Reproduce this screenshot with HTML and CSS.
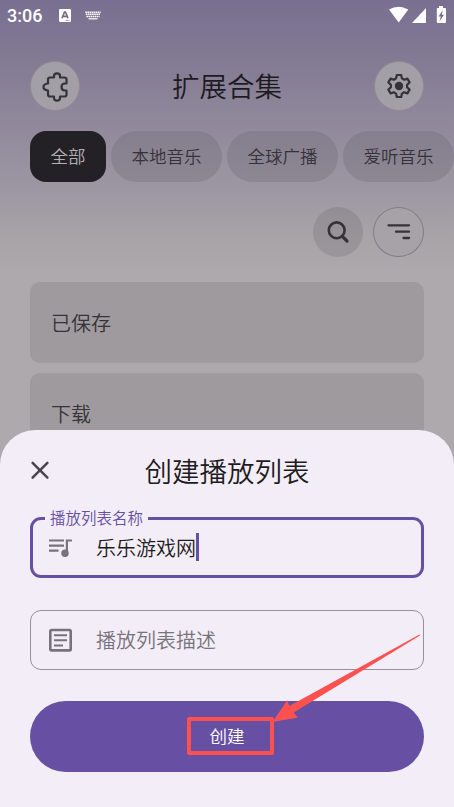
FILE: index.html
```html
<!DOCTYPE html>
<html lang="zh-CN">
<head>
<meta charset="utf-8">
<title>创建播放列表</title>
<link rel="stylesheet" href="styles.css">
</head>
<body>
<div class="phone">
  <div class="status">
    <span class="time">3:06</span>
    <svg class="ime" width="12" height="13" viewBox="0 0 12 13"><rect width="12" height="13" rx="1.2" fill="#fff"/><path d="M3 9.2 5.500 3h1L9 9.200M4 7.300h4" fill="none" stroke="#756c8b" stroke-width="1.700"/><path d="M6.500 11.500h4" stroke="#aaa4b6" stroke-width="1"/></svg>
    <svg class="keyboard" width="16" height="9" viewBox="0 0 16 9"><path d="M.3 1.200h15.400M.8 3.300h14.400M1.400 5.400h13.200" stroke="#fff" stroke-width="1.500" stroke-dasharray="1.600 .5"/><path d="M3.500 7.800h9" stroke="#fff" stroke-width="1.200"/></svg>
    <svg class="signals" width="60" height="18" viewBox="0 0 60 18" fill="#fff"><path d="M1 3.600Q10.500-2.200 20.300 3.600L10.700 16.400ZM24 17 38 2V17Z"/><path d="M48.800 2h2.200V0h4v2h2q1 0 1 1v13q0 1-1 1h-7.200q-1 0-1-1V3q0-1 1-1Z"/><path d="m54.500 4.500-4 6h2.300l-1.300 5 4.500-6.700h-2.300l1-4.300Z" fill="#756c8b"/></svg>
  </div>
  <header class="header">
    <div class="round">
      <svg class="puzzle" width="30" height="32" viewBox="0 0 30 32" fill="none" stroke="#35323a" stroke-width="2.200" stroke-linejoin="round"><path d="M7 9.500q0-2 2-2h4V6q0-2.600 3-2.600T19 6v1.500h4.500q2 0 2 2v4H24q-3.500 0-3.500 3.500t3.500 3.500h1.500v4q0 2-2 2H19V28q0 2.600-3 2.600T13 28v-1.500H9q-2 0-2-2v-4q-4.500-.5-4.500-3.500T7 13.500Z"/></svg>
    </div>
    <h1 class="title">扩展合集</h1>
    <div class="round">
      <svg width="26" height="26" viewBox="0 0 26 26" fill="none" stroke="#35323a" stroke-width="2.200" stroke-linejoin="round"><path d="M10.800 2h4.400l.7 3.400 2.300 1.300 3.200-1.100 2.200 3.800-2.500 2.300v2.600l2.500 2.300-2.200 3.800-3.200-1.100-2.300 1.300-.7 3.400h-4.400l-.7-3.400-2.300-1.300-3.200 1.100-2.200-3.800 2.500-2.300v-2.600L2.400 9.400l2.200-3.800 3.200 1.100 2.300-1.300Z"/><circle cx="13" cy="13" r="4.200" fill="#35323a" stroke="none"/></svg>
    </div>
  </header>
  <nav class="chips">
    <span class="chip chip-active">全部</span><span class="chip">本地音乐</span><span class="chip">全球广播</span><span class="chip">爱听音乐</span>
  </nav>
  <div class="tools">
    <div class="tool tool-search"><svg width="24" height="24" viewBox="0 0 24 24" fill="none" stroke="#35323a" stroke-width="2.600" stroke-linecap="round"><circle cx="10.700" cy="10.300" r="7.900"/><path d="m16.300 16.300 4.700 4.700" stroke-width="3.200"/></svg></div>
    <div class="tool tool-sort"><svg width="24" height="18" viewBox="0 0 24 18" stroke="#35323a" stroke-width="2.300" stroke-linecap="round"><path d="M1.500 2.300h20.500M9 8.700h13M16.500 15h5.500"/></svg></div>
  </div>
  <main class="cards">
    <div class="card">已保存</div>
    <div class="card">下载</div>
  </main>
  <section class="sheet">
    <div class="sheet-head">
      <svg class="close" width="20" height="20" viewBox="0 0 20 20" stroke="#49454f" stroke-width="2.500" stroke-linecap="round"><path d="m2.600 1.800 14.800 14.800m0-14.800L2.600 16.600"/></svg>
      <h2 class="sheet-title">创建播放列表</h2>
    </div>
    <div class="field field-focused">
      <span class="label">播放列表名称</span>
      <svg class="field-icon" width="26" height="20" viewBox="0 0 26 20" fill="none" stroke="#77737b" stroke-width="2.200"><path d="M1 3.500h15M1 8.700h15M1 13.700h9.500"/><path d="M18.900 16V3.500h5" stroke-width="2.200"/><circle cx="17" cy="16.200" r="3.700" fill="#77737b" stroke="none"/></svg>
      <span class="value">乐乐游戏网</span><span class="caret"></span>
    </div>
    <div class="field">
      <svg class="field-icon" width="26" height="24" viewBox="0 0 26 24" fill="none" stroke="#77737b" stroke-width="2.600"><rect x="2.300" y="2" width="20.400" height="20.400" rx="1.200"/><path d="M6 7.200h13M6 12.300h13M6 17.400h9" stroke-width="2"/></svg>
      <span class="placeholder">播放列表描述</span>
    </div>
    <button class="create"><span class="create-text">创建</span><span class="marker"></span></button>
  </section>
  <svg class="arrow" width="150" height="90" viewBox="271 633 150 90"><path d="M272.700 721.700 287.300 700.300 289.300 706 419.500 634.500 420 635.500 293.700 712.500 297.700 717.700Z" fill="#fd5150"/></svg>
</div>
</body>
</html>
```
FILE: styles.css
```css
* { box-sizing: border-box; }
body {
  margin: 0;
  font-family: Roboto, "Noto Sans CJK SC", sans-serif;
  font-weight: 400;
  color: #1d1b20;
}
svg { display: block; flex: none; }
.phone {
  position: relative;
  width: 454px;
  height: 807px;
  overflow: hidden;
  display: flex;
  flex-direction: column;
  background: linear-gradient(#796f91 0, #837a94 60px, #91899b 125px, #9d97a3 190px, #a6a2a6 230px, #ada9ad 275px, #ada9ad 100%);
}
.status { height: 31px; flex: none; display: flex; align-items: center; padding: 0 7px; color: #fff; }
.time { width: 52px; font-size: 18px; line-height: 20px; font-weight: 500; }
.keyboard { margin-left: 14px; }
.signals { margin-left: auto; margin-right: -1px; margin-top: -2px; }
.header { height: 50px; margin: 30px 30px 0; flex: none; display: flex; align-items: center; justify-content: space-between; }
.round, .tool { display: flex; align-items: center; justify-content: center; border-radius: 50%; }
.round { width: 50px; height: 50px; background: #a29fa6; border: 1px solid #918b95; }
.puzzle { margin-left: 2px; }
.title, .sheet-title { margin: 0; font-size: 27.5px; line-height: 40px; font-weight: 350; padding-top: 3px; }
.chips { display: flex; flex: none; gap: 5px; margin: 20px 0 0 30px; width: 424px; }
.chip { flex: none; width: 111px; height: 51px; border-radius: 26px; display: flex; align-items: center; justify-content: center; background: rgba(86, 78, 88, .2); color: #35323a; font-size: 17.5px; font-weight: 350; padding-bottom: 3px; }
.chip-active { width: 76px; border-radius: 16px; background: #232126; color: #b3afb5; }
.tools { display: flex; justify-content: flex-end; flex: none; gap: 10px; margin: 25px 30px 0 0; }
.tool { width: 50px; height: 50px; }
.tool-search { background: rgba(92, 84, 92, .2); }
.tool-sort { width: 51px; height: 50px; background: #a6a2a8; border: 1px solid #817d84; }
.cards { display: flex; flex-direction: column; gap: 10px; margin: 25px 30px 0; }
.card { height: 81px; flex: none; padding: 0 21px; border-radius: 10px; background: #9f9a9d; display: flex; align-items: center; font-size: 20px; font-weight: 350; color: #35323a; }
.sheet { position: absolute; left: 0; right: 0; bottom: 0; height: 377.500px; border-radius: 35px 35px 0 0; background: #f3edf7; padding: 20px 30px 0; }
.sheet-head { display: grid; grid-template-columns: 20px 1fr 20px; align-items: center; height: 41px; }
.sheet-title { text-align: center; }
.field { position: relative; display: flex; align-items: center; height: 60.500px; border: 1px solid #969099; border-radius: 11px; padding-left: 17px; margin-top: 32px; font-size: 20px; font-weight: 350; }
.field-focused { height: 61px; margin-top: 26px; border: 3px solid #6750a4; padding-left: 15px; }
.field-icon { margin-right: 22px; }
.label { position: absolute; left: 12px; top: -12px; height: 22px; line-height: 22px; padding: 0 5px; background: #f3edf7; color: #6750a4; font-size: 15.500px; }
.caret { width: 3px; height: 28px; background: #6750a4; }
.placeholder { color: #77737b; }
.create { position: relative; display: flex; align-items: center; justify-content: center; width: 100%; height: 71px; margin-top: 31px; border: 0; padding: 0; border-radius: 36px; background: #6750a4; color: #fff; font: 350 17.500px Roboto, "Noto Sans CJK SC", sans-serif; }
.create-text { padding-bottom: 3px; }
.marker { position: absolute; left: 157px; top: 16px; width: 87px; height: 38px; border: 4px solid #fd5150; border-radius: 2px; }
.arrow { position: absolute; left: 271px; top: 633px; }
```
